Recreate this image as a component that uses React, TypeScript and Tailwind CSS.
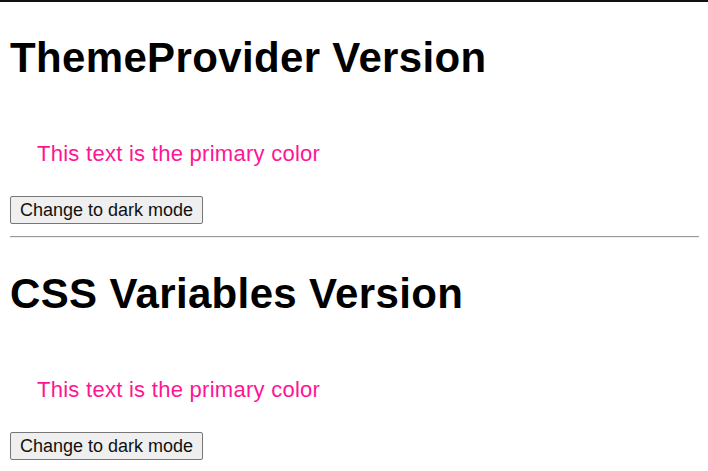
import React from "react";

function Section({ title, first }: { title: string; first?: boolean }) {
  return (
    <div className="flex flex-col">
      {first ? (
        <div className="h-[2px] bg-[#111111] -mx-[10px]" />
      ) : (
        <div className="h-[2px] border-t border-b border-t-[#9a9a9a] border-b-[#eeeeee] mr-[-1px]" />
      )}
      <h1 className="mt-[32px] text-[42px] leading-[48px] font-bold text-black tracking-[0.35px] whitespace-nowrap">
        {title}
      </h1>
      <p className="mt-[59px] pl-[27px] text-[22px] leading-[26px] text-[#ff1493] tracking-[0.27px] whitespace-nowrap">
        This text is the primary color
      </p>
      <div className="mt-[29px] flex">
        <button className="h-[28px] w-[193px] flex items-center justify-center bg-[#efefef] border border-[#767676] rounded-[2px] text-[18px] leading-[22px] text-[#111111] whitespace-nowrap">
          Change to dark mode
        </button>
      </div>
    </div>
  );
}

export default function App() {
  return (
    <div
      className="w-[708px] h-[471px] bg-white px-[10px] overflow-hidden"
      style={{ fontFamily: '"Liberation Sans", Arial, sans-serif' }}
    >
      <Section title="ThemeProvider Version" first />
      <div className="mt-[12px]">
        <Section title="CSS Variables Version" />
      </div>
    </div>
  );
}
